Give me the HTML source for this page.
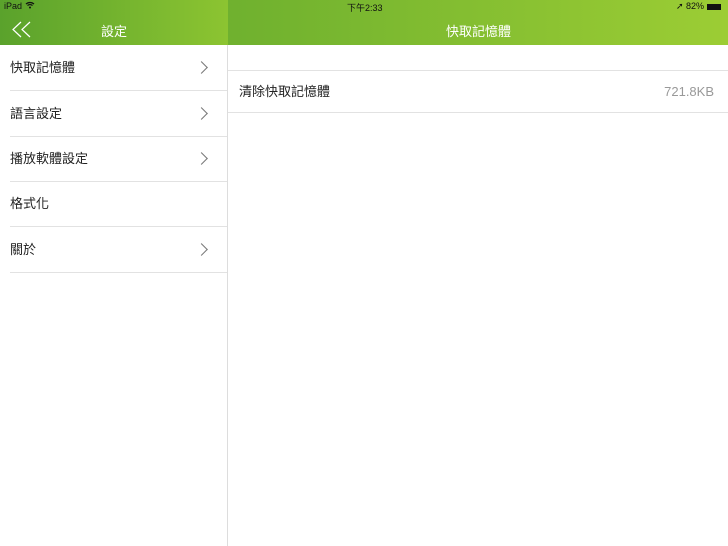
<!DOCTYPE html><html><head><meta charset="utf-8"><style>
body{margin:0;width:728px;height:546px;position:relative;background:#fff;font-family:"Liberation Sans","Noto Sans CJK TC",sans-serif;overflow:hidden}
.hdr{position:absolute;top:0;left:0;width:728px;height:45px;background:linear-gradient(90deg,#5ea52e 0%,#74b42f 40%,#9ccd34 100%)}
.lhdr{position:absolute;top:0;left:0;width:228px;height:45px;background:linear-gradient(90deg,#5aa22c,#8cc431)}
.st{position:absolute;top:1px;font-size:9px;color:#111}
.t{position:absolute;top:21px;color:#fff;font-size:13px}
.vline{position:absolute;left:227px;top:45px;width:1px;height:501px;background:#ddd}
.row{position:absolute;left:10px;width:217px;height:45px;border-bottom:1px solid #e2e2e2;font-size:13px;color:#222;line-height:45px}
.chev{position:absolute;right:21px;top:18px;width:8px;height:8px;border-right:1px solid #777;border-top:1px solid #777;transform:rotate(45deg)}
</style></head><body>
<div class="hdr"></div><div class="lhdr"></div>
<div class="st" style="left:4px">iPad <svg width="10" height="8" viewBox="0 0 10 8"><path d="M1 3a6 6 0 0 1 8 0M2.5 4.5a4 4 0 0 1 5 0" stroke="#111" stroke-width="1.2" fill="none"/><circle cx="5" cy="6.5" r="1" fill="#111"/></svg></div>
<div class="st" style="left:347px">下午2:33</div>
<div class="st" style="left:676px">➚ 82% <span style="display:inline-block;width:14px;height:6px;background:#111;vertical-align:middle"></span></div>
<svg style="position:absolute;left:12px;top:21px" width="20" height="17" viewBox="0 0 20 17"><path d="M9 1L1 8.5 9 16M18 1L10 8.5 18 16" stroke="#fff" stroke-width="1.2" fill="none"/></svg>
<div class="t" style="left:101px">設定</div>
<div class="t" style="left:446px">快取記憶體</div>
<div class="vline"></div>
<div class="row" style="top:45px">快取記憶體<i class="chev"></i></div>
<div class="row" style="top:91px">語言設定<i class="chev"></i></div>
<div class="row" style="top:136px">播放軟體設定<i class="chev"></i></div>
<div class="row" style="top:181px">格式化</div>
<div class="row" style="top:227px">關於<i class="chev"></i></div>
<div style="position:absolute;left:228px;top:70px;width:500px;height:41px;border-top:1px solid #e2e2e2;border-bottom:1px solid #e2e2e2;font-size:13px;line-height:41px;color:#222"><span style="margin-left:11px">清除快取記憶體</span><span style="position:absolute;right:14px;color:#999">721.8KB</span></div>
</body></html>
